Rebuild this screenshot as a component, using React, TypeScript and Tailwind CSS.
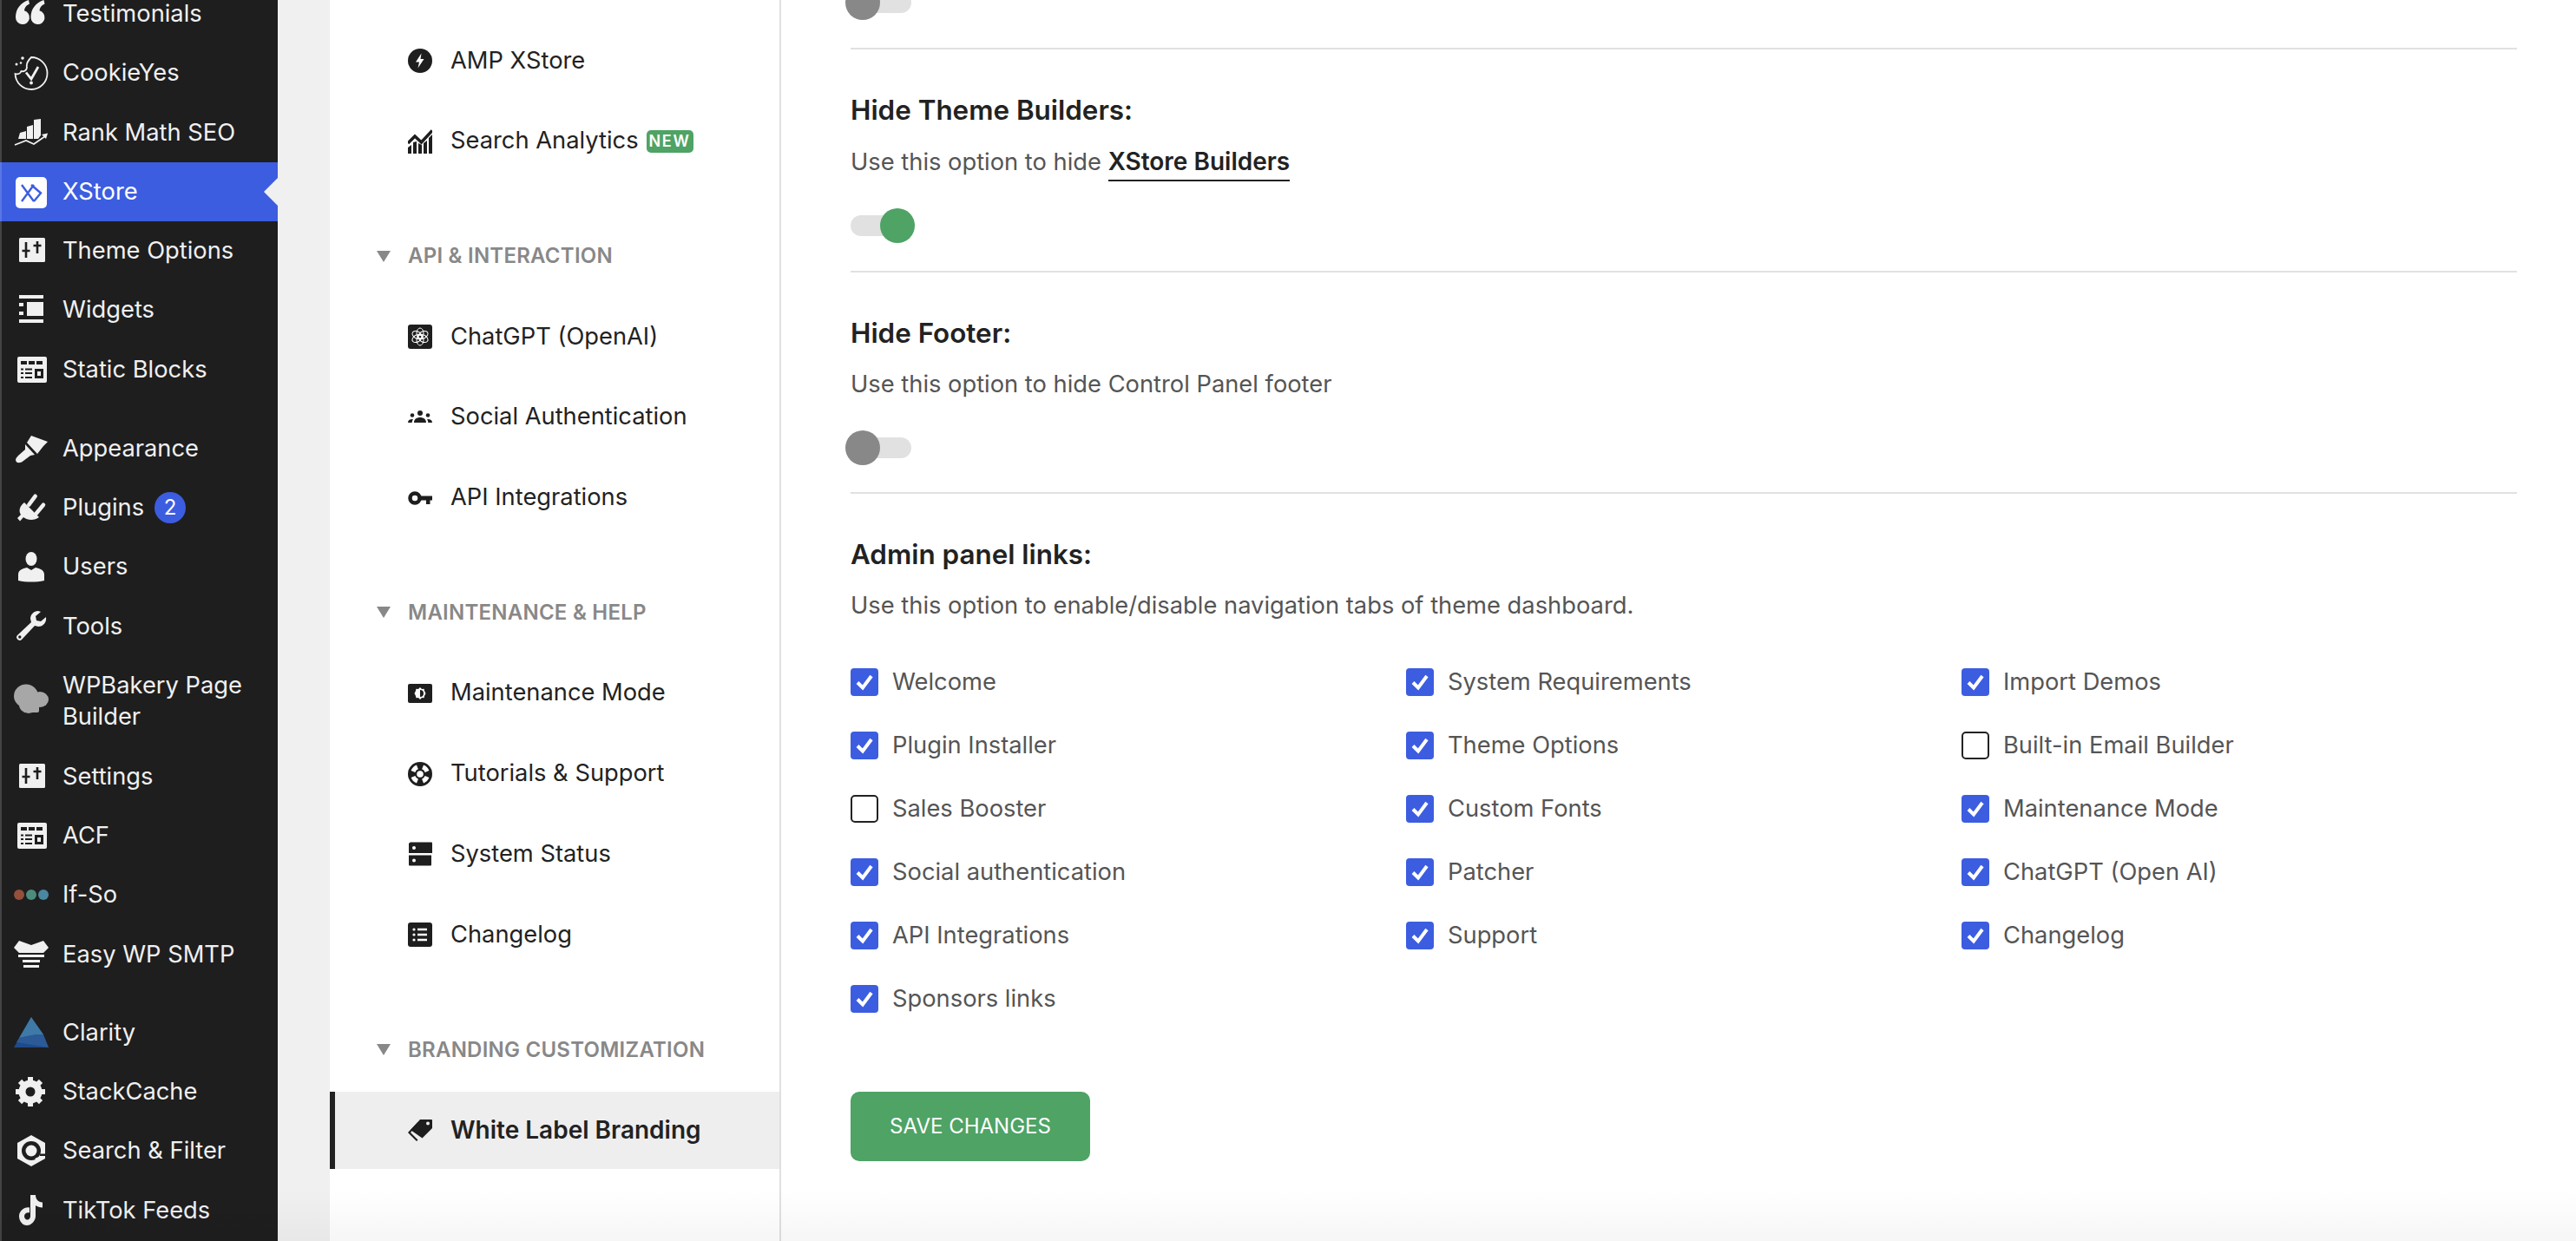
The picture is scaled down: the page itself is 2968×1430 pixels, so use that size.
import React from "react";
import { clsx } from "clsx";

const F = "#f0f0f1";
const D = "#1e1e1e";

const Svg = ({ children, size = 40 }: { children: React.ReactNode; size?: number }) => (
  <svg width={size} height={size} viewBox={`0 0 ${size} ${size}`} className="shrink-0 block">
    {children}
  </svg>
);

const SlidersIcon = () => (
  <Svg>
    <rect x="6" y="5" width="30" height="28" rx="1.5" fill={F} />
    <path d="M14 10v18M9.5 20h9M27 9v14M22.5 14h9" stroke={D} strokeWidth="2.6" />
  </Svg>
);

const BlocksIcon = () => (
  <Svg>
    <rect x="4" y="5" width="34" height="30" rx="2" fill={F} />
    <path d="M8 10h7v4H8zM17 10h7v4h-7zM26 10h7v4h-7z" fill={D} />
    <path d="M8 18.5h3v2H8zM13 18.5h8v2h-8zM8 23h3v2H8zM13 23h8v2h-8zM8 28h3v2H8zM13 28h8v2h-8z" fill={D} />
    <path d="M24 19h10v11H24z" fill={D} />
    <path d="M27 22h4v5h-4z" fill={F} />
  </Svg>
);

const sidebarIcons: Record<string, React.ReactNode> = {
  Testimonials: (
    <Svg>
      <path d="M17 4C8 7 2 14 2 24a8 8 0 1 0 10-7.700C12.500 12.500 14 10.500 18 8.500Z" fill={F} />
      <path d="M34.500 4C25.500 7 19.500 14 19.500 24a8 8 0 1 0 10-7.700C30 12.500 31.500 10.500 35.500 8.500Z" fill={F} />
    </Svg>
  ),
  CookieYes: (
    <Svg>
      <path
        d="M20 2A18.500 18.500 0 1 1 1.500 21c3 1 6 0 7-3 3 1 6-1 6.500-4 -1-4 1-8 5-12Z"
        fill="none"
        stroke={F}
        strokeWidth="1.800"
      />
      <circle cx="10" cy="3" r="1.800" fill={F} />
      <circle cx="3" cy="10" r="1.500" fill={F} />
      <circle cx="8" cy="8.500" r="1.300" fill={F} />
      <path d="M14 19.500l6 7.500L28 13" fill="none" stroke={F} strokeWidth="2.800" />
      <circle cx="20" cy="31.500" r="1.900" fill={F} />
    </Svg>
  ),
  "Rank Math SEO": (
    <Svg>
      <path d="M5 27l2-7 7-2v9zM15 27V13l7-2v16zM23 27V5l8-1v19l-3 4z" fill={F} />
      <path d="M1 34l13-5 9 4 13-9" fill="none" stroke={F} strokeWidth="1.800" />
      <path d="M32 22l7-1.500-2 6.500z" fill={F} />
    </Svg>
  ),
  XStore: (
    <Svg>
      <rect x="2" y="3" width="36" height="36" rx="5" fill="#fff" />
      <path d="M9 12L23 31M23 12L9 31M20 12L31 21.500 23 31" fill="none" stroke="#3c5de0" strokeWidth="2.400" />
    </Svg>
  ),
  "Theme Options": <SlidersIcon />,
  Widgets: (
    <Svg>
      <path d="M6 3h28v4H6zM6 31h28v4H6zM6 12h5v4H6zM6 22h5v4H6zM15 11h19v16H15z" fill={F} />
    </Svg>
  ),
  "Static Blocks": <BlocksIcon />,
  Appearance: (
    <Svg>
      <path d="M20 5L39 12 34 17 27 26 15 13z" fill={F} />
      <path d="M13 15L24 27 19 28 9 35.500Q3 38 2 33 2 31 5 28L13 21Z" fill={F} />
    </Svg>
  ),
  Plugins: (
    <Svg>
      <path d="M12 14L29 31C24 35 16 35 11 31L7 35.500 4 32 8 28C5 23 7 18 12 14Z" fill={F} />
      <path d="M17.300 16.700L24.700 6.700M25.700 26.700L34 16.700" stroke={F} strokeWidth="4.500" strokeLinecap="round" />
    </Svg>
  ),
  Users: (
    <Svg>
      <ellipse cx="20" cy="11" rx="6.500" ry="8" fill={F} />
      <path d="M5 36v-7c0-5 5-7 10-8l5 3 5-3c5 1 10 3 10 8v7c-9 2-21 2-30 0z" fill={F} />
    </Svg>
  ),
  Tools: (
    <Svg>
      <path
        d="M28 2c-5 0-9 4-9 9l1 4L4 30c-3 3 2 8 5 5l15-16 4 1c6 0 10-5 9-11l-6 5-5-1-1-5 6-5z"
        fill={F}
      />
      <circle cx="6.800" cy="32" r="1.700" fill={D} />
    </Svg>
  ),
  "WPBakery Page Builder": (
    <Svg>
      <ellipse cx="14" cy="14" rx="14" ry="13.500" fill="#a7a7a7" />
      <ellipse cx="30" cy="18" rx="10" ry="9" fill="#a7a7a7" />
      <ellipse cx="17" cy="24" rx="11" ry="10" fill="#a7a7a7" />
      <rect x="11" y="20" width="18" height="13" rx="2" fill="#a7a7a7" />
    </Svg>
  ),
  "If-So": (
    <Svg>
      <circle cx="6" cy="20" r="6" fill="#94503c" />
      <circle cx="20" cy="20" r="6" fill="#4b8c7d" />
      <circle cx="34" cy="20" r="6" fill="#4b87a0" />
    </Svg>
  ),
  "Easy WP SMTP": (
    <Svg>
      <path d="M6 4l14 5L34 4l6 8-6 6H6l-6-6z" fill={F} />
      <path d="M5 21h30v3H5zM10 27h20v3H10zM11 33h18v3H11z" fill={F} transform="translate(0 -1)" />
    </Svg>
  ),
  Clarity: (
    <Svg>
      <path d="M20 2L0 37h40z" fill="#1f4a8a" />
      <path d="M20 2L6 26l20-4 8 0z" fill="#3f79a8" />
      <path d="M6 26l-3 5 37 6-6-15-8 0z" fill="#2b5a96" />
    </Svg>
  ),
  StackCache: (
    <Svg>
      <g transform="translate(-1 0)">
        <circle cx="20" cy="20" r="9.500" fill="none" stroke={F} strokeWidth="8" />
        {[0, 45, 90, 135, 180, 225, 270, 315].map((a) => (
          <rect key={a} x="17" y="3" width="6" height="6" fill={F} transform={`rotate(${a} 20 20)`} />
        ))}
      </g>
    </Svg>
  ),
  "Search & Filter": (
    <Svg>
      <path d="M20 2L36 11V29L20 38 4 29V11Z" fill={F} />
      <circle cx="20" cy="20" r="11" fill={D} />
      <circle cx="20" cy="20" r="6.500" fill={F} />
      <path d="M30 23.500H37V26H30Z" fill={D} />
      <path d="M24 29L31 26 32 28 26 31Z" fill={F} />
    </Svg>
  ),
  "TikTok Feeds": (
    <Svg>
      <path
        d="M19 2h6c0 5 3 8 8 8.500v6c-3 0-6-1-8-2.500v12c0 6-5 11-10 11S6 32 6 26.500c0-6 6-11 12-10v6c-3-1-6 1-6 4 0 2 1.500 4 3.500 4 2 0 3.500-2 3.500-4z"
        fill={F}
      />
    </Svg>
  ),
};

type SideItem = { label: string; badge?: string; active?: boolean; tall?: boolean; gap?: string };

const sideItems: SideItem[] = [
  { label: "Testimonials" },
  { label: "CookieYes" },
  { label: "Rank Math SEO" },
  { label: "XStore", active: true },
  { label: "Theme Options" },
  { label: "Widgets" },
  { label: "Static Blocks" },
  { label: "Appearance", gap: "mt-[23px]" },
  { label: "Plugins", badge: "2" },
  { label: "Users" },
  { label: "Tools" },
  { label: "WPBakery Page Builder", tall: true },
  { label: "Settings" },
  { label: "ACF" },
  { label: "If-So" },
  { label: "Easy WP SMTP" },
  { label: "Clarity", gap: "mt-[22px]" },
  { label: "StackCache" },
  { label: "Search & Filter" },
  { label: "TikTok Feeds" },
];

const SideRow = ({ item }: { item: SideItem }) => (
  <div
    className={clsx(
      "relative flex gap-[16px] text-[27.3px] leading-[36px] text-[#f0f0f1] shrink-0 items-center",
      item.tall ? "h-[105px]" : "h-[68.25px]",
      item.active ? "border-l-2 border-[#5a76e5] bg-[#3c5de0] pl-[14px] text-white" : "pl-[16px]",
      item.gap
    )}
  >
    {item.label === "Settings" ? <SlidersIcon /> : item.label === "ACF" ? <BlocksIcon /> : sidebarIcons[item.label]}
    <span className={clsx(item.tall && "w-[220px]")}>{item.label}</span>
    {item.badge && (
      <span className="-ml-[4px] flex h-[36px] w-[36px] items-center justify-center rounded-full bg-[#3c5de0] text-[24px] text-white">
        {item.badge}
      </span>
    )}
    {item.active && (
      <span className="absolute right-0 top-[18px] h-0 w-0 border-y-[16px] border-r-[16px] border-y-transparent border-r-[#f0f0f1]" />
    )}
  </div>
);

const navIcons: Record<string, React.ReactNode> = {
  "AMP XStore": (
    <Svg size={28}>
      <circle cx="14" cy="14" r="14" fill={D} />
      <path d="M15.500 5.500L9 15.500h4l-1.500 7 7-10.500h-4z" fill="#fff" />
    </Svg>
  ),
  "Search Analytics": (
    <Svg size={28}>
      <path d="M0 21l4-3v10H0zM6 15l4-1v14H6zM12 16l4 2v10h-4zM18 16l4-3v15h-4zM24 10l4-4v22h-4z" fill={D} />
      <path d="M0 16L8 8l7.500 7L28 1.500" fill="none" stroke={D} strokeWidth="3.500" />
    </Svg>
  ),
  "ChatGPT (OpenAI)": (
    <Svg size={28}>
      <rect width="28" height="28" rx="3" fill={D} />
      <g fill="none" stroke="#fff" strokeWidth="1">
        <circle cx="14" cy="14" r="3" />
        <ellipse cx="14" cy="10" rx="4" ry="6" />
        <ellipse cx="14" cy="10" rx="4" ry="6" transform="rotate(60 14 14)" />
        <ellipse cx="14" cy="10" rx="4" ry="6" transform="rotate(120 14 14)" />
        <ellipse cx="14" cy="10" rx="4" ry="6" transform="rotate(180 14 14)" />
        <ellipse cx="14" cy="10" rx="4" ry="6" transform="rotate(240 14 14)" />
        <ellipse cx="14" cy="10" rx="4" ry="6" transform="rotate(300 14 14)" />
      </g>
    </Svg>
  ),
  "Social Authentication": (
    <Svg size={28}>
      <circle cx="14" cy="9" r="3" fill={D} />
      <circle cx="5" cy="11.500" r="2.300" fill={D} />
      <circle cx="23" cy="11.500" r="2.300" fill={D} />
      <path d="M7 20c0-4 3-6 7-6s7 2 7 6zM0 20c0-2.500 2-4 5-4l1 .5C5 17.500 4.700 19 4.700 20zM28 20c0-2.500-2-4-5-4l-1 .5c1 1 1.300 2.500 1.300 3.500z" fill={D} />
    </Svg>
  ),
  "API Integrations": (
    <Svg size={28}>
      <circle cx="8" cy="14" r="5.500" fill="none" stroke={D} strokeWidth="4.500" />
      <path d="M14 11.500h14v5h-2.500V21H21v-4.500h-7z" fill={D} />
    </Svg>
  ),
  "Maintenance Mode": (
    <Svg size={28}>
      <rect y="3" width="28" height="22" rx="2" fill={D} />
      <path d="M14 7l2 1.900 2.500-.2.600 2.500 1.400 2.800-1.400 2.800-.6 2.500-2.500-.2-2 1.900-2-1.900-2.500.2-.6-2.500L7.500 14l1.400-2.800.6-2.500 2.500.2z" fill="#fff" />
      <path d="M14 10a4 4 0 0 1 0 8z" fill={D} />
    </Svg>
  ),
  "Tutorials & Support": (
    <Svg size={28}>
      <circle cx="14" cy="14" r="14" fill={D} />
      <circle cx="14" cy="14" r="3.800" fill="#fff" />
      <g fill="#fff" transform="rotate(45 14 14)">
        <path d="M9.500 3.800a11 11 0 0 1 9 0l-2 4.700a6 6 0 0 0-5 0z" />
        <path d="M9.500 24.200a11 11 0 0 0 9 0l-2-4.700a6 6 0 0 1-5 0z" />
        <path d="M3.800 9.500a11 11 0 0 0 0 9l4.700-2a6 6 0 0 1 0-5z" />
        <path d="M24.200 9.500a11 11 0 0 1 0 9l-4.700-2a6 6 0 0 0 0-5z" />
      </g>
    </Svg>
  ),
  "System Status": (
    <Svg size={28}>
      <path d="M2 1.500a1 1 0 0 1 1-1h24a1 1 0 0 1 1 1V13H1V1.500zM1 15.500h26V26.500a1 1 0 0 1-1 1H2a1 1 0 0 1-1-1z" fill={D} />
      <circle cx="7" cy="7" r="2" fill="#fff" />
      <circle cx="7" cy="21.500" r="2" fill="#fff" />
    </Svg>
  ),
  Changelog: (
    <Svg size={28}>
      <rect width="28" height="28" rx="3" fill={D} />
      <g fill="#fff">
        <circle cx="7" cy="8" r="1.600" />
        <circle cx="7" cy="14" r="1.600" />
        <circle cx="7" cy="20" r="1.600" />
        <path d="M11 6.700h11v2.600H11zM11 12.700h11v2.600H11zM11 18.700h11v2.600H11z" />
      </g>
    </Svg>
  ),
  "White Label Branding": (
    <Svg size={28}>
      <path d="M3 15L14 3h13a1 1 0 0 1 1 1v9L16.500 24.500z" fill={D} transform="translate(0 -1)" />
      <circle cx="23" cy="6.500" r="2" fill="#eeeeee" />
      <path d="M0 16l10 10 1.500-1.500L3 16 13 4.500h-2z" fill={D} transform="translate(0 1)" />
    </Svg>
  ),
};

const NavItem = ({
  label,
  active,
  badge,
}: {
  label: string;
  active?: boolean;
  badge?: boolean;
}) => (
  <div
    className={clsx(
      "flex h-[88.8px] shrink-0 items-center gap-[21px] text-[#222]",
      active
        ? "border-l-[6px] border-[#222] bg-[#eeeeee] pl-[84px] text-[28px] font-semibold"
        : "pl-[90px] text-[27.3px]"
    )}
  >
    {navIcons[label]}
    <span>{label}</span>
    {badge && (
      <span className="-ml-[12px] flex h-[26px] w-[54px] items-center justify-center rounded-[5px] bg-[#4ea365] text-[18px] font-semibold tracking-[0.1em] text-white">
        NEW
      </span>
    )}
  </div>
);

const NavHeader = ({ label }: { label: string }) => (
  <div className="flex h-[88.8px] shrink-0 items-center gap-[20px] pl-[54px] text-[24px] font-semibold tracking-[0.01em] text-[#888]">
    <span className="h-0 w-0 border-x-[8px] border-t-[13px] border-x-transparent border-t-[#888]" />
    <span>{label}</span>
  </div>
);

const navGroups: { title?: string; items: string[] }[] = [
  { items: ["AMP XStore", "Search Analytics"] },
  { title: "API & INTERACTION", items: ["ChatGPT (OpenAI)", "Social Authentication", "API Integrations"] },
  { title: "MAINTENANCE & HELP", items: ["Maintenance Mode", "Tutorials & Support", "System Status", "Changelog"] },
  { title: "BRANDING CUSTOMIZATION", items: ["White Label Branding"] },
];

const Toggle = ({ on }: { on?: boolean }) => (
  <div className="flex h-[40px] items-center">
    <div className="relative h-[24px] w-[70px] rounded-full bg-[#e1e1e1]">
      <span
        className={clsx(
          "absolute top-[-8px] h-[40px] w-[40px] rounded-full",
          on ? "left-[34px] bg-[#4ea365]" : "left-[-6px] bg-[#888888]"
        )}
      />
    </div>
  </div>
);

const Heading = ({ children }: { children: React.ReactNode }) => (
  <h3 className="text-[31.4px] leading-[40px] font-semibold text-[#222]">{children}</h3>
);

const Desc = ({ children }: { children: React.ReactNode }) => (
  <p className="mt-[19px] text-[27.3px] leading-[40px] text-[#555]">{children}</p>
);

const links: [string, boolean][] = [
  ["Welcome", true],
  ["System Requirements", true],
  ["Import Demos", true],
  ["Plugin Installer", true],
  ["Theme Options", true],
  ["Built-in Email Builder", false],
  ["Sales Booster", false],
  ["Custom Fonts", true],
  ["Maintenance Mode", true],
  ["Social authentication", true],
  ["Patcher", true],
  ["ChatGPT (Open AI)", true],
  ["API Integrations", true],
  ["Support", true],
  ["Changelog", true],
  ["Sponsors links", true],
];

const Check = ({ label, on }: { label: string; on: boolean }) => (
  <label className="flex h-[40px] items-center gap-[16px] text-[27.3px] text-[#555]">
    {on ? (
      <span className="flex h-[32px] w-[32px] items-center justify-center rounded-[4px] bg-[#3c5de0]">
        <svg width="22" height="20" viewBox="0 0 22 20">
          <path d="M3 10.500l6 6L19 3" fill="none" stroke="#fff" strokeWidth="4" />
        </svg>
      </span>
    ) : (
      <span className="h-[32px] w-[32px] rounded-[5px] border-2 border-[#222] bg-white" />
    )}
    {label}
  </label>
);

export default function App() {
  return (
    <div className="relative flex h-[1430px] w-[2968px] overflow-hidden bg-white font-['Inter',sans-serif]">
      <aside className="flex h-full w-[320px] shrink-0 flex-col border-l-2 border-[#444] bg-[#1e1e1e]">
        <div className="-mt-[18px] -ml-[2px] flex flex-col">
          {sideItems.map((item) => (
            <SideRow key={item.label} item={item} />
          ))}
        </div>
      </aside>
      <div className="w-[60px] shrink-0 bg-[#f0f0f1]" />
      <nav className="flex w-[520px] shrink-0 flex-col border-r-2 border-[#e0e0e0] pt-[25.6px]">
        {navGroups.map((g, i) => (
          <div key={i} className={clsx("flex flex-col gap-[4px]", i > 0 && "mt-[43.6px]")}>
            {g.title && <NavHeader label={g.title} />}
            {g.items.map((l) => (
              <NavItem
                key={l}
                label={l}
                active={l === "White Label Branding"}
                badge={l === "Search Analytics"}
              />
            ))}
          </div>
        ))}
      </nav>
      <main className="flex-1 pl-[80px] pr-[68px]">
        <div className="-mt-[17px] border-b-2 border-[#e1e1e1] pb-[32px]">
          <Toggle />
        </div>
        <section className="border-b-2 border-[#e1e1e1] pb-[31.5px] pt-[50px]">
          <Heading>Hide Theme Builders:</Heading>
          <Desc>
            Use this option to hide{" "}
            <span className="border-b-2 border-[#222] pb-[4px] text-[28px] font-semibold text-[#222]">
              XStore Builders
            </span>
          </Desc>
          <div className="mt-[33px]">
            <Toggle on />
          </div>
        </section>
        <section className="border-b-2 border-[#e1e1e1] pb-[31.5px] pt-[50px]">
          <Heading>Hide Footer:</Heading>
          <Desc>Use this option to hide Control Panel footer</Desc>
          <div className="mt-[33px]">
            <Toggle />
          </div>
        </section>
        <section className="pt-[50px]">
          <Heading>Admin panel links:</Heading>
          <Desc>Use this option to enable/disable navigation tabs of theme dashboard.</Desc>
          <div className="mt-[48px] grid grid-cols-[640px_640px_640px] gap-y-[33px]">
            {links.map(([label, on], i) => (
              <Check key={i} label={label} on={on} />
            ))}
          </div>
          <button className="mt-[87px] h-[80px] w-[276px] rounded-[10px] bg-[#4ea365] text-[24px] text-white">
            SAVE CHANGES
          </button>
        </section>
      </main>
      <div className="pointer-events-none absolute inset-x-0 bottom-0 h-[60px] bg-gradient-to-b from-transparent to-black/[0.035]" />
    </div>
  );
}
